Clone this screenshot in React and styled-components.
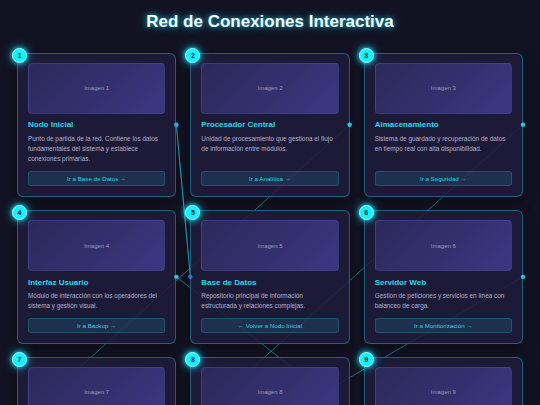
import React, { useLayoutEffect, useRef, useState } from 'react';
import styled, { createGlobalStyle } from 'styled-components';

const Global = createGlobalStyle`
  html, body { margin: 0; padding: 0; background: #131222; }
  body { font-family: "Liberation Sans", Arial, sans-serif; color: #e5e7eb; }
  * { box-sizing: border-box; }
`;

const Page = styled.div`
  padding: 11px 17px 24px;
`;

const Title = styled.h1`
  margin: 0 0 20px;
  text-align: center;
  font-size: 17px;
  line-height: 22px;
  font-weight: 700;
  color: #effdff;
  text-shadow: 0 0 5px rgba(34, 211, 238, 0.75), 0 0 12px rgba(34, 211, 238, 0.45);
`;

const Grid = styled.div`
  position: relative;
  display: grid;
  grid-template-columns: repeat(3, 1fr);
  gap: 13.6px 14px;
`;

const Layer = styled.svg`
  position: absolute;
  left: 0;
  top: 0;
  width: 100%;
  height: 100%;
  overflow: visible;
  pointer-events: none;
  z-index: ${(p) => p.$z};
`;

const Card = styled.div`
  position: relative;
  z-index: 1;
  display: flex;
  flex-direction: column;
  padding: 9px 10px 10px;
  background: rgba(31, 28, 58, 0.9);
  border: 1px solid rgba(34, 211, 238, 0.38);
  border-radius: 6px;
  box-shadow: 0 4px 14px rgba(0, 0, 0, 0.35);
`;

const Badge = styled.span`
  position: absolute;
  top: -6px;
  left: -6px;
  width: 15px;
  height: 15px;
  border-radius: 50%;
  background: #14f1ff;
  border: 1px solid #9ff9ff;
  color: #0c1424;
  font-size: 7px;
  font-weight: 700;
  display: flex;
  align-items: center;
  justify-content: center;
  box-shadow: 0 0 5px #22e8ff, 0 0 11px rgba(34, 232, 255, 0.6);
  z-index: 3;
`;

const Picture = styled.div`
  height: 50.7px;
  border-radius: 4px;
  border: 1px solid rgba(120, 110, 220, 0.18);
  background: linear-gradient(135deg, #2c295b 0%, #34306f 55%, #3d3783 100%);
  display: flex;
  align-items: center;
  justify-content: center;
  font-size: 6px;
  color: #9d9bb9;
`;

const CardTitle = styled.h3`
  margin: 6.7px 0 0;
  font-size: 8px;
  line-height: 10px;
  font-weight: 700;
  color: #2ad6ee;
`;

const Desc = styled.p`
  margin: 3.5px 0 6.4px;
  font-size: 6.4px;
  line-height: 10.2px;
  color: #b3b1c8;
`;

const LinkButton = styled.button`
  margin-top: auto;
  height: 14.7px;
  width: 100%;
  padding: 0;
  display: flex;
  align-items: center;
  justify-content: center;
  font-family: inherit;
  font-size: 6.2px;
  color: #2ad6ee;
  background: rgba(34, 211, 238, 0.12);
  border: 1px solid rgba(34, 211, 238, 0.22);
  border-radius: 3px;
  cursor: pointer;
`;

const nodes = [
  { id: 1, title: 'Nodo Inicial', desc: 'Punto de partida de la red. Contiene los datos fundamentales del sistema y establece conexiones primarias.', to: 5, label: 'Ir a Base de Datos →' },
  { id: 2, title: 'Procesador Central', desc: 'Unidad de procesamiento que gestiona el flujo de información entre módulos.', to: 7, label: 'Ir a Analítica →' },
  { id: 3, title: 'Almacenamiento', desc: 'Sistema de guardado y recuperación de datos en tiempo real con alta disponibilidad.', to: 8, label: 'Ir a Seguridad →' },
  { id: 4, title: 'Interfaz Usuario', desc: 'Módulo de interacción con los operadores del sistema y gestión visual.', to: 9, label: 'Ir a Backup →' },
  { id: 5, title: 'Base de Datos', desc: 'Repositorio principal de información estructurada y relaciones complejas.', to: 1, label: '← Volver a Nodo Inicial' },
  { id: 6, title: 'Servidor Web', desc: 'Gestión de peticiones y servicios en línea con balanceo de carga.', to: 10, label: 'Ir a Monitorización →' },
  { id: 7, title: 'Analítica', desc: 'Procesamiento de métricas y generación de informes de rendimiento.', to: 11, label: 'Ir a Reportes →' },
  { id: 8, title: 'Seguridad', desc: 'Control de accesos, cifrado y protección frente a amenazas externas.', to: 12, label: 'Ir a Autenticación →' },
  { id: 9, title: 'Backup', desc: 'Copias de respaldo periódicas y restauración rápida ante fallos.', to: 10, label: 'Ir a Monitorización →' },
  { id: 10, title: 'Monitorización', desc: 'Supervisión continua del estado y rendimiento de la red.', to: 11, label: 'Ir a Reportes →' },
  { id: 11, title: 'Reportes', desc: 'Generación de informes y visualización de resultados.', to: 12, label: 'Ir a Autenticación →' },
  { id: 12, title: 'Autenticación', desc: 'Verificación de identidad y gestión de sesiones de usuario.', to: 7, label: '← Volver a Analítica' },
];

export default function App() {
  const gridRef = useRef(null);
  const cardRefs = useRef({});
  const [links, setLinks] = useState([]);

  useLayoutEffect(() => {
    const measure = () => {
      const g = gridRef.current;
      if (!g) return;
      const gr = g.getBoundingClientRect();
      const rect = (id) => {
        const r = cardRefs.current[id].getBoundingClientRect();
        return {
          left: r.left - gr.left,
          right: r.right - gr.left,
          mid: r.top - gr.top + r.height / 2,
        };
      };
      const out = nodes.map((n) => {
        const s = rect(n.id);
        const t = rect(n.to);
        const fwd = n.to > n.id;
        return {
          key: n.id,
          x1: fwd ? s.right : s.left,
          y1: s.mid,
          x2: fwd ? t.left : t.right,
          y2: t.mid,
          fwd,
        };
      });
      setLinks(out);
    };
    measure();
    window.addEventListener('resize', measure);
    return () => window.removeEventListener('resize', measure);
  }, []);

  const go = (id) => {
    const el = cardRefs.current[id];
    if (el) el.scrollIntoView({ behavior: 'smooth', block: 'center' });
  };

  return (
    <>
      <Global />
      <Page>
        <Title>Red de Conexiones Interactiva</Title>
        <Grid ref={gridRef}>
          <Layer $z={0}>
            {links.map((l) => (
              <line key={l.key} x1={l.x1} y1={l.y1} x2={l.x2} y2={l.y2} stroke="#22d3ee" strokeOpacity="0.55" strokeWidth="1" />
            ))}
          </Layer>
          {nodes.map((n) => (
            <Card key={n.id} ref={(el) => (cardRefs.current[n.id] = el)}>
              <Badge>{n.id}</Badge>
              <Picture>Imagen {n.id}</Picture>
              <CardTitle>{n.title}</CardTitle>
              <Desc>{n.desc}</Desc>
              <LinkButton onClick={() => go(n.to)}>{n.label}</LinkButton>
            </Card>
          ))}
          <Layer $z={2}>
            {links.map((l) => (
              <g key={l.key}>
                <circle cx={l.x1} cy={l.y1} r="2.2" fill={l.fwd ? '#22d3ee' : '#3b82f6'} fillOpacity={l.fwd ? 0.95 : 0.6} />
                <circle cx={l.x2} cy={l.y2} r="2" fill="#3b82f6" fillOpacity="0.55" />
              </g>
            ))}
          </Layer>
        </Grid>
      </Page>
    </>
  );
}
